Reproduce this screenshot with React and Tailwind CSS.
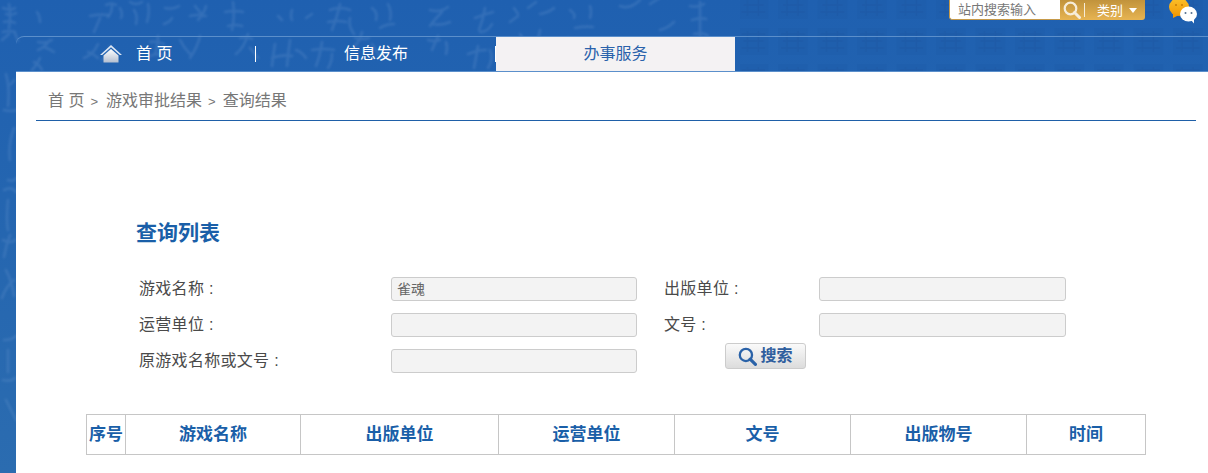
import React from 'react';

const columns = [
    { label: '序号', width: 'w-[39px]' },
    { label: '游戏名称', width: 'w-[175px]' },
    { label: '出版单位', width: 'w-[198px]' },
    { label: '运营单位', width: 'w-[176px]' },
    { label: '文号', width: 'w-[176px]' },
    { label: '出版物号', width: 'w-[176px]' },
    { label: '时间', width: 'w-[119px]' },
];

// calligraphy wash and seal tiles behind the header
const BrushTexture = () => (
    <svg className="absolute left-0 top-0 pointer-events-none" width="1208" height="473" fill="none" aria-hidden="true">
        <defs>
            <filter id="soft"><feGaussianBlur stdDeviation="1" /></filter>
            <pattern id="tiles" x="778" y="-8" width="39.5" height="36" patternUnits="userSpaceOnUse">
                <rect x="0" y="0" width="30" height="27" fill="#1a559f" fillOpacity="0.2" />
                <path d="M3 6h24M5 13h20M3 20h24M9 3v21M20 3v21" stroke="#1a4f96" strokeOpacity="0.22" strokeWidth="1.5" />
            </pattern>
        </defs>
        <rect x="740" y="0" width="468" height="71" fill="url(#tiles)" />
        <g stroke="#6d9bd2" strokeOpacity="0.26" strokeWidth="2.6" strokeLinecap="round" filter="url(#soft)">
            <path d="M3 8q8 3 12 0M6 14q6 2 10-1M4 22q7-2 11 1M9 4q2 12 0 24M3 32q6-2 12 0M2 40l7-6M15 33l3 8" />
            <path d="M38 42q8 2 14-2M50 40q-6 8-12 10M44 47q6 2 10 5" />
            <path d="M37 12q3 4 3 10" />
            <path d="M40 58q-4 8-8 12M34 62q5 2 8 8" />
            <path d="M106 5q6-3 10 0M112 5q0 8-4 12M120 8q3 6 1 10" />
            <path d="M90 16q10-2 18-1M100 18l-6 14" />
            <path d="M88 52q6 2 10 6M98 44q-4 10-14 14M110 46q-2 10-8 14" />
            <path d="M130 2q6 4 12 0M134 10q4 6 2 14M148 4q2 8-1 18" />
            <path d="M150 42q8-1 14 2M158 36q0 10-3 18M150 56q6-3 16-1" />
            <path d="M165 8q8 2 14-2M172 18q-2 4-8 6" />
            <path d="M195 6l8 10M206 6q-2 8-8 14M190 16q8-2 16 0" />
            <path d="M180 40q4 8 10 14M200 36q-2 10-10 22" />
            <path d="M225 12q10-2 18 0M228 26q8-2 14 0M233 2q2 14-1 28" />
            <path d="M240 38q8-2 12 1M248 34q-4 14-12 20M250 48q4 4 8 10" />
            <path d="M278 16l4 4M292 10q-2 6 0 10M306 18l6-4" />
            <path d="M275 44q-2 12-3 22M290 40q-2 14-3 26M272 58q10-4 20-2M296 50q6 2 10 8" />
            <path d="M330 10q10-4 20 0M328 22q10-2 18 0M340 4q-2 10-8 26M350 18q-2 8 4 16" />
            <path d="M312 50q12-2 22 0M322 42q-2 14-6 24M332 54q0 8-4 14" />
            <path d="M372 8q6 4 4 12M388 4q4 8 2 16M380 28q6-4 14-4" />
            <path d="M355 38q8 2 14 0M362 32q-2 10-8 14M372 44q4 8 10 14" />
            <path d="M430 10q10 3 18-3M442 12q-8 8-12 14M432 24q10 2 18-2" />
            <path d="M428 40q6 2 12 0M438 36l-6 14M446 42q2 6 0 12" />
            <path d="M475 18q10-4 18-6M485 8q-2 12-6 22M492 24q-4 8-12 8M468 54q10-4 18-4M478 46q-2 12-4 22M490 50q4 8-2 18" />
            <path d="M514 8l4 6M528 8l8-6M510 22l8-6M520 34l4 6M540 30q-2 12-6 22" />
            <path d="M540 14q10-2 14-6M535 50q10-4 16-2M545 44v24" />
            <path d="M570 10q6 4 4 8M590 6q2 6 0 12M575 28q10-2 18-1" />
            <path d="M560 44q8-2 14 0M568 38q-1 14-4 26M582 44q2 12-2 22" />
            <path d="M620 6q10 4 20-6M660 30q8-2 14-8M650 4l16-10" />
            <path d="M690 6q8 2 14-2M692 20q8-3 14-1M694 34q10-2 14 2M700 2v36M680 52q10-2 20 0M690 46l-4 20" />
            <path d="M630 48q8-2 14-2M640 42l-6 18" />
            <path d="M600 42l12 14M618 40q-4 12-10 20" />
            <path d="M14 128q-6 16-4 32M4 110q8 2 12 0M8 180q6 2 8-2M4 190q8-4 12 2M8 200q-2 20 0 30M3 240q8 4 12 0M10 235q-4 10-6 22M6 270q6 12 8 26M14 280q-8 6-12 18M4 340q8 0 12-4M8 350v22M3 380q8 2 12-2M6 400q6 12 10 20" />
            <path d="M6 74q4 14 2 32M8 86q4-2 6-6" />
        </g>
    </svg>
);

const HomeIcon = () => (
    <svg width="22" height="18" viewBox="0 0 22 18" aria-hidden="true">
        <defs>
            <linearGradient id="homeFill" x1="0" y1="0" x2="0" y2="1">
                <stop offset="0" stopColor="#ffffff" />
                <stop offset="1" stopColor="#b4bfd0" />
            </linearGradient>
        </defs>
        <path d="M11 0L22 10H19.8L11 2.2L2.2 10H0Z" fill="#dfe8f4" />
        <path d="M11 4L18.5 10.6V17.5H3.5V10.6Z" fill="url(#homeFill)" />
    </svg>
);

const WechatIcon = () => (
    <svg width="30" height="24" viewBox="0 0 30 24" aria-hidden="true">
        <defs>
            <linearGradient id="bubble" x1="0" y1="0" x2="0" y2="1">
                <stop offset="0" stopColor="#fcc02a" />
                <stop offset="1" stopColor="#f39a05" />
            </linearGradient>
        </defs>
        <ellipse cx="11" cy="7" rx="10" ry="9" fill="url(#bubble)" />
        <path d="M5 13l0 5 6-3z" fill="#f39a05" />
        <circle cx="8" cy="5" r="1" fill="#c77c05" />
        <circle cx="14" cy="5" r="1" fill="#c77c05" />
        <ellipse cx="20.5" cy="14" rx="8.5" ry="7.5" fill="#ffffff" />
        <path d="M23 20l3 3.5 0-5z" fill="#ffffff" />
        <circle cx="17.5" cy="13" r="1" fill="#55708f" />
        <circle cx="23.5" cy="13" r="1" fill="#55708f" />
    </svg>
);

const SearchGlass = ({ color, size }) => (
    <svg width={size} height={size} viewBox="0 0 18 18" fill="none" aria-hidden="true">
        <circle cx="7.5" cy="7.5" r="5.8" stroke={color} strokeWidth="2.2" />
        <path d="M11.5 11.5L16.5 16.5" stroke={color} strokeWidth="3" strokeLinecap="round" />
    </svg>
);

const Field = ({ label, value }) => (
    <>
        <div className="text-base leading-6 tracking-[0.3px] text-[#4a4a4a]">{label}</div>
        <div className="h-6 rounded-[3px] border border-[#ccc] bg-[#f3f3f3] px-[5px] text-sm leading-[22px] text-[#666]">{value}</div>
    </>
);

export default function App() {
    return (
        <div className="relative h-[473px] w-[1208px] overflow-hidden bg-gradient-to-b from-[#1f60b0] to-[#2b6cb0] font-['Liberation_Sans','Noto_Sans_CJK_SC',sans-serif]">
            <BrushTexture />

            {/* top bar */}
            <div className="relative flex h-9 justify-end pr-[10px]">
                <div className="flex h-5 w-[196px] overflow-hidden rounded-b-[3px]">
                    <div className="w-[111px] rounded-bl-[3px] border-b border-l border-[#c69a4a] bg-white pl-2 text-[13px] leading-[19px] text-[#777]">站内搜索输入</div>
                    <div className="flex flex-1 items-center bg-gradient-to-b from-[#c1933c] to-[#e7b452] pl-[3px] text-white">
                        <SearchGlass color="#f6ecd8" size={18} />
                        <div className="ml-[3px] h-[14px] w-px bg-[#f6ecd8]" />
                        <span className="ml-3 text-[13px] leading-[19px]">类别</span>
                        <span className="ml-[6px] h-0 w-0 border-x-4 border-t-[5px] border-x-transparent border-t-white" />
                    </div>
                </div>
                <div className="ml-[23px]">
                    <WechatIcon />
                </div>
            </div>

            {/* nav */}
            <div className="relative ml-4 flex h-9 rounded-tl-lg border-y border-y-[#5b8fcb] text-base text-white">
                <div className="flex h-[34px] w-[239px] items-center pl-[84px]">
                    <HomeIcon />
                    <span className="ml-[14px]">首 页</span>
                </div>
                <div className="mt-[9px] h-4 w-px bg-white" />
                <div className="w-[239px] pl-[88px] leading-[34px]">信息发布</div>
                <div className="mt-[9px] h-4 w-px bg-white" />
                <div className="w-[239px] bg-[#f4f2f3] text-center leading-[34px] text-[#2a62ab]">办事服务</div>
            </div>

            {/* content */}
            <div className="relative ml-4 h-[401px] bg-white">
                <div className="ml-5 mr-3 h-[49px] border-b border-b-[#1f60a8] pl-3 pt-[17px] text-base leading-[24px] text-[#777]">
                    <span>首 页</span>
                    <span className="ml-[6px] mr-[8px] text-[13px]">&gt;</span>
                    <span>游戏审批结果</span>
                    <span className="ml-[6px] mr-[7px] text-[13px]">&gt;</span>
                    <span>查询结果</span>
                </div>

                <h2 className="ml-[120px] mt-[98px] text-[21px] font-bold leading-7 text-[#1a5fa8]">查询列表</h2>

                <div className="ml-[123px] mt-[30px] grid w-[927px] grid-cols-[252px_246px_27px_155px_247px] gap-y-3">
                    <Field label="游戏名称 :" value="雀魂" />
                    <div />
                    <Field label="出版单位 :" />
                    <Field label="运营单位 :" />
                    <div />
                    <Field label="文号 :" />
                    <Field label="原游戏名称或文号 :" />
                    <div className="col-span-3 -mt-[6px] flex justify-start pl-[88px]">
                        <button className="flex h-[26px] w-[81px] items-center justify-center rounded-[3px] border border-[#ccc] bg-gradient-to-b from-[#fafafa] to-[#dcdcdc] text-base font-bold text-[#2f5e9e]">
                            <SearchGlass color="#2a62a8" size={19} />
                            <span className="ml-[3px]">搜索</span>
                        </button>
                    </div>
                </div>

                <table className="ml-[70px] mt-[41px] w-[1059px] table-fixed border-collapse">
                    <thead>
                        <tr>
                            {columns.map(col => (
                                <th key={col.label} className={`${col.width} h-[40px] border border-[#c6c6c6] p-0 text-[17px] font-bold text-[#1a5fa8]`}>
                                    {col.label}
                                </th>
                            ))}
                        </tr>
                    </thead>
                </table>
            </div>
        </div>
    );
}
